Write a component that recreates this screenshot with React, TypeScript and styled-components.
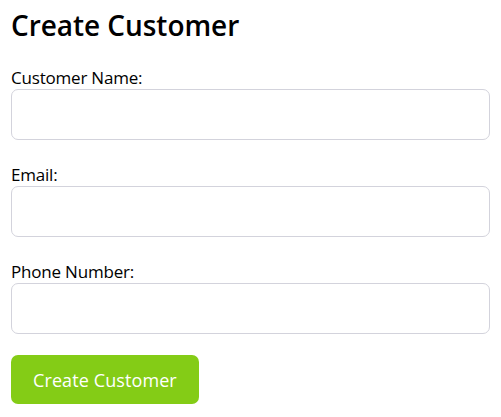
import React from "react";
import styled, { createGlobalStyle } from "styled-components";

const Global = createGlobalStyle`
  html, body { margin: 0; padding: 0; background: #ffffff; }
  body { font-family: "Open Sans", "Noto Sans", sans-serif; color: #000; }
`;

const Page = styled.div`
  padding: 0 11px;
`;

const Title = styled.h2`
  margin: 0;
  padding-top: 7px;
  height: 61px;
  font-size: 28px;
  font-weight: 600;
  line-height: 36px;
  letter-spacing: -0.05px;
`;

const Form = styled.form`
  display: flex;
  flex-direction: column;
`;

const Field = styled.div`
  display: flex;
  flex-direction: column;
  margin-bottom: 25px;
`;

const Label = styled.label`
  font-size: 17px;
  font-weight: 500;
  line-height: 19px;
  height: 19px;
  margin-bottom: 2px;
  letter-spacing: -0.2px;
`;

const Input = styled.input`
  box-sizing: border-box;
  height: 51px;
  width: 100%;
  border: 1px solid #d3d3dc;
  border-radius: 7px;
  padding: 0 12px;
  font: inherit;
  outline: none;
`;

const Button = styled.button`
  align-self: flex-start;
  box-sizing: border-box;
  margin-top: -4px;
  height: 49px;
  padding: 0 22px;
  border: none;
  border-radius: 7px;
  background: #84cc16;
  color: #ffffff;
  font-family: inherit;
  font-size: 18px;
  letter-spacing: 0.1px;
`;

export default function App() {
  return (
    <Page>
      <Global />
      <Title>Create Customer</Title>
      <Form onSubmit={(e) => e.preventDefault()}>
        <Field>
          <Label htmlFor="name">Customer Name:</Label>
          <Input id="name" type="text" />
        </Field>
        <Field>
          <Label htmlFor="email">Email:</Label>
          <Input id="email" type="email" />
        </Field>
        <Field>
          <Label htmlFor="phone">Phone Number:</Label>
          <Input id="phone" type="tel" />
        </Field>
        <Button type="submit">Create Customer</Button>
      </Form>
    </Page>
  );
}
